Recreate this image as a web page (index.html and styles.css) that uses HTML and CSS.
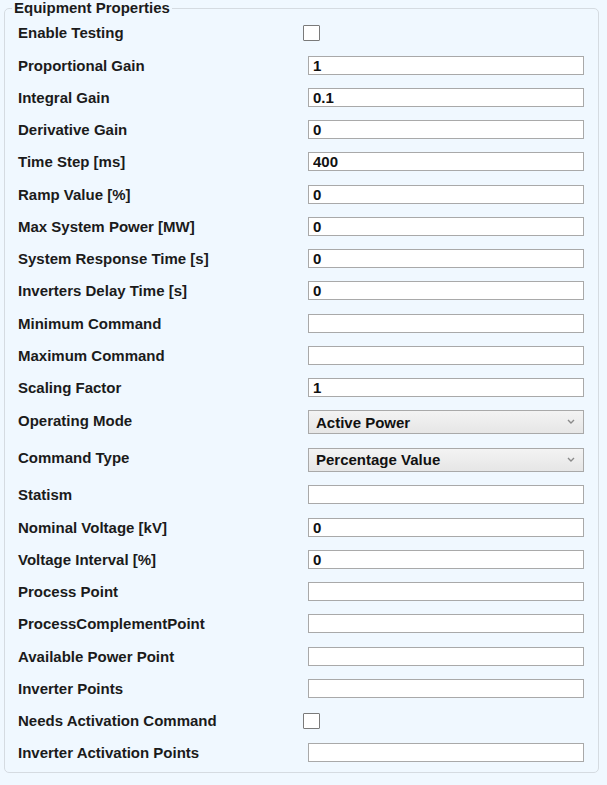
FILE: index.html
```html
<!DOCTYPE html>
<html>
<head>
<meta charset="utf-8">
<link rel="stylesheet" href="styles.css">
</head>
<body>
<fieldset class="panel">
  <legend class="panel-title">Equipment Properties</legend>
  <div class="row row-first"><label class="lbl">Enable Testing</label><div class="ctl"><input type="checkbox" class="chk"></div></div>
  <div class="row"><label class="lbl">Proportional Gain</label><div class="ctl"><input class="txt" value="1"></div></div>
  <div class="row"><label class="lbl">Integral Gain</label><div class="ctl"><input class="txt" value="0.1"></div></div>
  <div class="row"><label class="lbl">Derivative Gain</label><div class="ctl"><input class="txt" value="0"></div></div>
  <div class="row"><label class="lbl">Time Step [ms]</label><div class="ctl"><input class="txt" value="400"></div></div>
  <div class="row"><label class="lbl">Ramp Value [%]</label><div class="ctl"><input class="txt" value="0"></div></div>
  <div class="row"><label class="lbl">Max System Power [MW]</label><div class="ctl"><input class="txt" value="0"></div></div>
  <div class="row"><label class="lbl">System Response Time [s]</label><div class="ctl"><input class="txt" value="0"></div></div>
  <div class="row"><label class="lbl">Inverters Delay Time [s]</label><div class="ctl"><input class="txt" value="0"></div></div>
  <div class="row"><label class="lbl">Minimum Command</label><div class="ctl"><input class="txt" value=""></div></div>
  <div class="row"><label class="lbl">Maximum Command</label><div class="ctl"><input class="txt" value=""></div></div>
  <div class="row"><label class="lbl">Scaling Factor</label><div class="ctl"><input class="txt" value="1"></div></div>
  <div class="row row-sel1"><label class="lbl lbl-up">Operating Mode</label><div class="ctl"><div class="selwrap"><select class="sel"><option>Active Power</option></select><span class="chev"><svg width="8" height="5" viewBox="0 0 8 5"><path d="M1 1 L4 4 L7 1" fill="none" stroke="#8a8a8a" stroke-width="1.4"/></svg></span></div></div></div>
  <div class="row row-sel2"><label class="lbl lbl-up">Command Type</label><div class="ctl"><div class="selwrap"><select class="sel"><option>Percentage Value</option></select><span class="chev"><svg width="8" height="5" viewBox="0 0 8 5"><path d="M1 1 L4 4 L7 1" fill="none" stroke="#8a8a8a" stroke-width="1.4"/></svg></span></div></div></div>
  <div class="row"><label class="lbl">Statism</label><div class="ctl"><input class="txt" value=""></div></div>
  <div class="row"><label class="lbl">Nominal Voltage [kV]</label><div class="ctl"><input class="txt" value="0"></div></div>
  <div class="row"><label class="lbl">Voltage Interval [%]</label><div class="ctl"><input class="txt" value="0"></div></div>
  <div class="row"><label class="lbl">Process Point</label><div class="ctl"><input class="txt" value=""></div></div>
  <div class="row"><label class="lbl">ProcessComplementPoint</label><div class="ctl"><input class="txt" value=""></div></div>
  <div class="row"><label class="lbl">Available Power Point</label><div class="ctl"><input class="txt" value=""></div></div>
  <div class="row"><label class="lbl">Inverter Points</label><div class="ctl"><input class="txt" value=""></div></div>
  <div class="row"><label class="lbl">Needs Activation Command</label><div class="ctl"><input type="checkbox" class="chk"></div></div>
  <div class="row"><label class="lbl">Inverter Activation Points</label><div class="ctl"><input class="txt" value=""></div></div>
</fieldset>
</body>
</html>
```
FILE: styles.css
```css
html, body {
  margin: 0;
  padding: 0;
  background: #f0f8ff;
}
body {
  font-family: "Liberation Sans", Arial, sans-serif;
  font-weight: bold;
  font-size: 15px;
  color: #1b1b1b;
}
.panel {
  margin: 0 8px 0 4px;
  padding: 0 12px 3px 13px;
  border: 1px solid #d5dbe1;
  border-radius: 5px;
  background: #f0f8ff;
}
.panel-title {
  padding: 0 2px;
  margin-left: -6px;
  font-size: 15px;
  line-height: 16px;
  color: #1b1b1b;
}
.row {
  display: grid;
  grid-template-columns: 285px 1fr;
  align-items: center;
  height: 32.25px;
}
.row-first { height: 33px; }
.row-sel1 { height: 37px; }
.row-sel2 { height: 38px; }
.lbl {
  line-height: 17px;
  white-space: nowrap;
}
.lbl-up { position: relative; top: -2px; }
.ctl {
  display: flex;
  align-items: center;
}
.chk {
  appearance: none;
  -webkit-appearance: none;
  margin: 0;
  width: 17px;
  height: 16px;
  border: 1px solid #7a7a7a;
  border-radius: 1px;
  background: #fff;
  box-sizing: border-box;
}
.txt {
  margin: 0 0 0 5px;
  box-sizing: border-box;
  width: 276px;
  height: 19px;
  padding: 0 4px;
  border: 1px solid #a9a9a9;
  background: #fff;
  font-family: "Liberation Sans", Arial, sans-serif;
  font-weight: bold;
  font-size: 15px;
  color: #111;
  outline: none;
}
.selwrap {
  position: relative;
  margin-left: 5px;
  width: 276px;
  height: 24px;
}
.sel {
  appearance: none;
  -webkit-appearance: none;
  box-sizing: border-box;
  width: 276px;
  height: 24px;
  margin: 0;
  padding: 0 0 0 7px;
  border: 1px solid #a9a9a9;
  border-radius: 0;
  background: linear-gradient(#f3f3f3, #e6e6e6);
  font-family: "Liberation Sans", Arial, sans-serif;
  font-weight: bold;
  font-size: 15px;
  color: #111;
}
.chev {
  position: absolute;
  right: 9px;
  top: 9px;
  width: 8px;
  height: 5px;
  display: block;
  line-height: 0;
}
```
